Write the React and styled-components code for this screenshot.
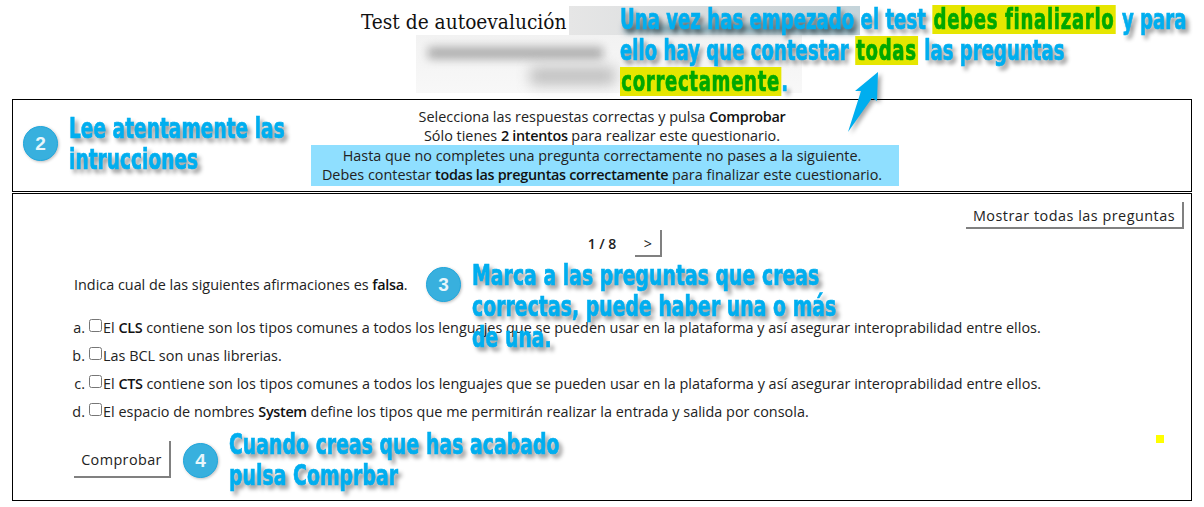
import React from "react";
import styled, { createGlobalStyle } from "styled-components";

const Global = createGlobalStyle`
  html, body { margin: 0; padding: 0; background: #fff; }
  body { font-family: "Open Sans", "Liberation Sans", sans-serif; font-size: 14.4px; color: #222; }
  b { font-weight: 600; color: #111; letter-spacing: -0.3px; }
`;

const Page = styled.div`
  position: relative;
  width: 1204px;
  height: 507px;
  overflow: hidden;
  padding: 0 12px;
  box-sizing: border-box;
`;

const Header = styled.header`
  height: 99px;
  padding-top: 8px;
  padding-left: 349px;
  box-sizing: border-box;
`;

const Title = styled.h1`
  margin: 0;
  font-family: "DejaVu Serif", serif;
  font-stretch: condensed;
  font-weight: 400;
  font-size: 20.7px;
  line-height: 28px;
  color: #111;
`;

const Box = styled.section`
  border: 1px solid #000;
  box-sizing: border-box;
`;

const Instructions = styled(Box)`
  height: 93px;
  padding-top: 7px;
  text-align: center;
  line-height: 19px;
  margin-bottom: 1px;
`;

const Band = styled.div`
  margin: 0 292px 0 298px;
  padding: 1px 6px 2px 0;
  background: #8fdfff;
  line-height: 19px;
`;

const Quiz = styled(Box)`
  height: 308px;
  padding-top: 8px;
`;

const TopRow = styled.div`
  display: flex;
  justify-content: flex-end;
  padding-right: 7px;
`;

const FlatButton = styled.button`
  font-family: "Open Sans", "Liberation Sans", sans-serif;
  font-size: 14.4px;
  color: #222;
  background: #fff;
  border: 0;
  border-right: 2px solid #808080;
  border-bottom: 2px solid #808080;
  padding: 2px 0 0;
  height: ${(p) => p.$h}px;
  width: ${(p) => p.$w}px;
  letter-spacing: ${(p) => p.$spacing || 0}px;
`;

const Pager = styled.div`
  display: grid;
  grid-template-columns: 1fr auto 1fr;
  align-items: center;
  column-gap: 19px;
  height: 27px;
  margin-top: 1px;
`;

const PageCount = styled.span`
  grid-column: 2;
  font-size: 14px;
  font-weight: 600;
`;

const QuizBody = styled.div`
  padding-left: 61px;
`;

const Question = styled.p`
  margin: 18px 0 0;
  line-height: 20px;
`;

const Options = styled.ol`
  list-style: none;
  margin: 18px 0 0;
  padding: 0;
`;

const Option = styled.li`
  display: flex;
  align-items: center;
  height: 28px;
  white-space: nowrap;
  letter-spacing: 0.02px;
`;

const Letter = styled.span`
  width: 14px;
  text-align: right;
  margin-left: -3px;
  margin-right: 4px;
`;

const Tick = styled.span`
  width: 11px;
  height: 11px;
  border: 1px solid #767676;
  border-radius: 2.5px;
  margin: -3px 1px 0 0;
  flex: none;
`;

const Check = styled(FlatButton)`
  margin-top: 16px;
  display: block;
`;

const Blur = styled.div`
  position: absolute;
  left: ${(p) => p.$x}px;
  top: ${(p) => p.$y}px;
  width: ${(p) => p.$w}px;
  height: ${(p) => p.$h}px;
  background: ${(p) => p.$bg};
`;

const Smudge = styled.div`
  position: absolute;
  left: ${(p) => p.$x}px;
  top: ${(p) => p.$y}px;
  width: ${(p) => p.$w}px;
  height: ${(p) => p.$h}px;
  background: ${(p) => p.$bg || "#a8a8a8"};
  opacity: ${(p) => p.$o};
  filter: blur(${(p) => p.$r || 6}px);
`;

const Note = styled.div`
  position: absolute;
  left: ${(p) => p.$x}px;
  top: ${(p) => p.$y}px;
  font-family: "DejaVu Sans", "Liberation Sans", sans-serif;
  font-weight: 700;
  font-size: 28px;
  line-height: 31px;
  color: #00aeef;
  -webkit-text-stroke: 0.7px #00aeef;
  text-shadow: 5px 4px 5px rgba(0, 0, 0, 0.45);
  white-space: nowrap;
  transform-origin: left top;
  transform: scaleX(${(p) => p.$sx});
`;

const Mark = styled.span`
  display: inline-block;
  background: #e6e600;
  color: #00a800;
  -webkit-text-stroke: 0.7px #00a800;
  text-shadow: none;
  line-height: 29px;
  padding: 0 2px;
  letter-spacing: 1px;
`;

const Badge = styled.div`
  position: absolute;
  left: ${(p) => p.$x}px;
  top: ${(p) => p.$y}px;
  width: 35px;
  height: 35px;
  border-radius: 50%;
  display: flex;
  align-items: center;
  justify-content: center;
  background: #38b0de;
  border: 1px solid #1fa6dc;
  box-sizing: border-box;
  color: #e8f6fb;
  font-family: "Liberation Sans", sans-serif;
  font-weight: 700;
  font-size: 19px;
  box-shadow: 1px 1px 3px rgba(0, 0, 0, 0.25);
`;

const Arrow = styled.svg`
  position: absolute;
  left: 840px;
  top: 65px;
  filter: drop-shadow(3px 2px 2px rgba(0, 0, 0, 0.35));
`;

const Dot = styled.div`
  position: absolute;
  left: 1156px;
  top: 435px;
  width: 8px;
  height: 8px;
  background: #ffff00;
`;

const options = [
  { id: "a", body: <>El <b>CLS</b> contiene son los tipos comunes a todos los lenguajes que se pueden usar en la plataforma y así asegurar interoprabilidad entre ellos.</> },
  { id: "b", body: <>Las BCL son unas librerias.</> },
  { id: "c", body: <>El <b>CTS</b> contiene son los tipos comunes a todos los lenguajes que se pueden usar en la plataforma y así asegurar interoprabilidad entre ellos.</> },
  { id: "d", body: <>El espacio de nombres <b>System</b> define los tipos que me permitirán realizar la entrada y salida por consola.</> },
];

export default function App() {
  return (
    <Page>
      <Global />
      <Header>
        <Title>Test de autoevalución</Title>
      </Header>
      <Instructions>
        <div>Selecciona las respuestas correctas y pulsa <b>Comprobar</b></div>
        <div>Sólo tienes <b>2 intentos</b> para realizar este questionario.</div>
        <Band>
          <div>Hasta que no completes una pregunta correctamente no pases a la siguiente.</div>
          <div>Debes contestar <b>todas las preguntas correctamente</b> para finalizar este cuestionario.</div>
        </Band>
      </Instructions>
      <Quiz>
        <TopRow>
          <FlatButton $w={218} $h={27} $spacing={0.5}>Mostrar todas las preguntas</FlatButton>
        </TopRow>
        <Pager>
          <PageCount>1 / 8</PageCount>
          <FlatButton $w={27} $h={27}>&gt;</FlatButton>
        </Pager>
        <QuizBody>
          <Question>Indica cual de las siguientes afirmaciones es <b>falsa</b>.</Question>
          <Options>
            {options.map((o) => (
              <Option key={o.id}>
                <Letter>{o.id}.</Letter>
                <Tick />
                <span>{o.body}</span>
              </Option>
            ))}
          </Options>
          <Check $w={97} $h={37} $spacing={0.4}>Comprobar</Check>
        </QuizBody>
      </Quiz>

      <Blur $x={569} $y={6} $w={291} $h={29} $bg="linear-gradient(90deg, #e6e6e6, #d6dadc 60%, #c4d4da)" />
      <Blur $x={416} $y={35} $w={386} $h={58} $bg="linear-gradient(#f2f2f2, #f8f8f8)" />
      <Smudge $x={624} $y={24} $w={232} $h={9} $bg="#64909f" $o={0.8} $r={3} />
      <Smudge $x={428} $y={47} $w={175} $h={12} $o={0.95} $r={5} />
      <Smudge $x={530} $y={67} $w={85} $h={18} $o={0.7} $r={7} />

      <Note $x={620} $y={4} $sx={0.648}>
        Una vez has empezado el test <Mark>debes finalizarlo</Mark> y para
        <br />
        ello hay que contestar <Mark>todas</Mark> las preguntas
        <br />
        <Mark>correctamente</Mark>.
      </Note>
      <Badge $x={23} $y={126}>2</Badge>
      <Note $x={69} $y={113} $sx={0.665}>
        Lee atentamente las
        <br />
        intrucciones
      </Note>
      <Badge $x={426} $y={267}>3</Badge>
      <Note $x={472} $y={260} $sx={0.675}>
        Marca a las preguntas que creas
        <br />
        correctas, puede haber una o más
        <br />
        de una.
      </Note>
      <Badge $x={183} $y={443}>4</Badge>
      <Note $x={229} $y={429} $sx={0.675}>
        Cuando creas que has acabado
        <br />
        pulsa Comprbar
      </Note>
      <Arrow width="50" height="75" viewBox="0 0 50 75">
        <path d="M38 7 L15 26 L21 26 L8 67 L32 33 L37 36 Z" fill="#00aeef" />
      </Arrow>
      <Dot />
    </Page>
  );
}
